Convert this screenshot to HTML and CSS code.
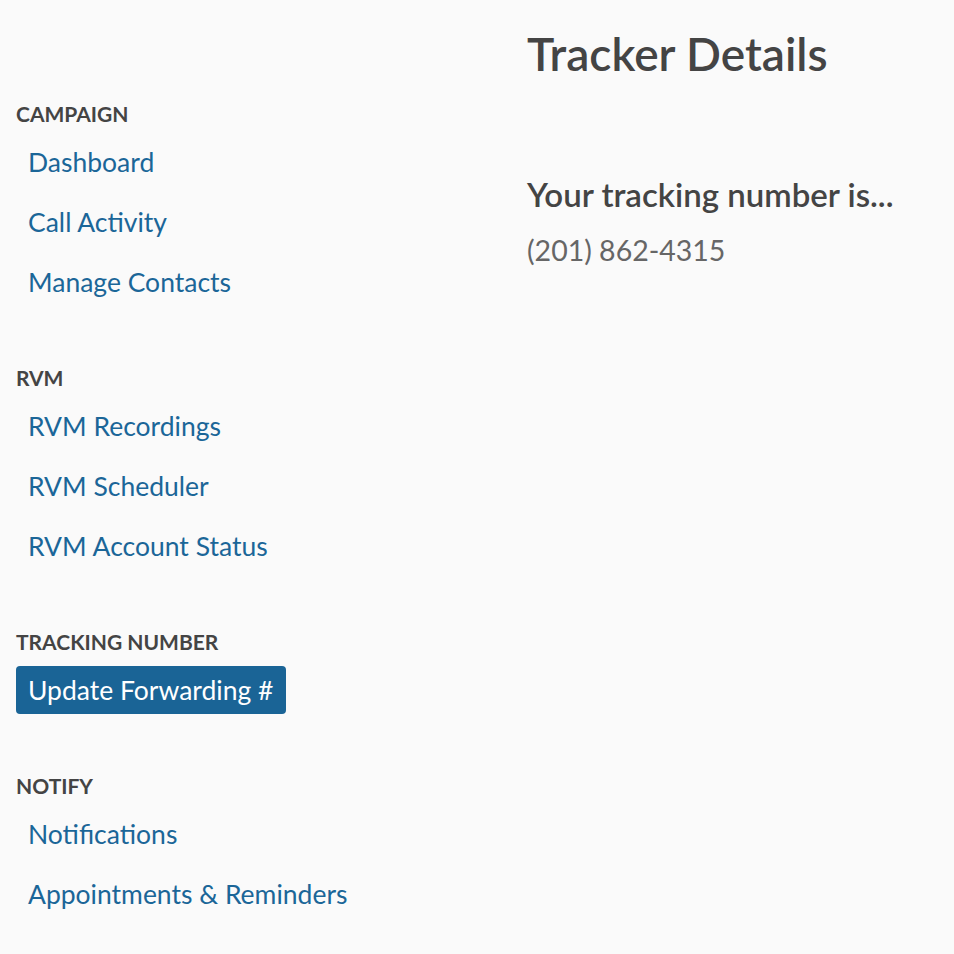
FILE: index.html
```html
<!DOCTYPE html>
<html lang="en">
<head>
<meta charset="UTF-8">
<meta name="viewport" content="width=device-width, initial-scale=1.0">
<title>Tracker Details</title>
<link rel="stylesheet" href="styles.css">
</head>
<body>
<div class="page">
  <nav class="sidebar">
    <div class="nav-section">
      <h4 class="nav-title">CAMPAIGN</h4>
      <ul class="nav-list">
        <li><a href="#">Dashboard</a></li>
        <li><a href="#">Call Activity</a></li>
        <li><a href="#">Manage Contacts</a></li>
      </ul>
    </div>

    <div class="nav-section">
      <h4 class="nav-title">RVM</h4>
      <ul class="nav-list">
        <li><a href="#">RVM Recordings</a></li>
        <li><a href="#">RVM Scheduler</a></li>
        <li><a href="#">RVM Account Status</a></li>
      </ul>
    </div>

    <div class="nav-section">
      <h4 class="nav-title">TRACKING NUMBER</h4>
      <ul class="nav-list">
        <li><a href="#" class="active">Update Forwarding #</a></li>
      </ul>
    </div>

    <div class="nav-section">
      <h4 class="nav-title">NOTIFY</h4>
      <ul class="nav-list">
        <li><a href="#">Notifications</a></li>
        <li><a href="#">Appointments &amp; Reminders</a></li>
      </ul>
    </div>
  </nav>

  <main class="content">
    <h1>Tracker Details</h1>
    <h3>Your tracking number is...</h3>
    <p class="phone">(201) 862-4315</p>
  </main>
</div>
</body>
</html>
```

FILE: styles.css
```css
:root {
  --fundo: #fafafa;
  --texto: #444;
  --texto-suave: #666;
  --azul: #1b6698;
  --azul-ativo: #1a6496;
}

body {
  margin: 0;
  background: var(--fundo);
  color: var(--texto);
  font-family: 'Lato', 'Noto Sans', sans-serif;
}

.page {
  display: grid;
  grid-template-columns: 511px 1fr;
  padding: 0 16px;
}

.sidebar {
  padding-top: 102px;
}

.nav-section {
  margin-bottom: 54px;
}

.nav-title {
  margin: 0 0 6px 0;
  font-size: 21px;
  line-height: 24px;
  font-weight: bold;
  color: var(--texto);
}

.nav-list {
  list-style: none;
  margin: 0;
  padding: 0;
}

.nav-list li {
  padding: 6px 0;
}

.nav-list a {
  display: inline-block;
  padding: 12px 13px 12px 12px;
  font-size: 26.5px;
  line-height: 24px;
  color: var(--azul);
  text-decoration: none;
  border-radius: 4px;
}

.nav-list a.active {
  background: var(--azul-ativo);
  color: #fff;
}

.content h1 {
  margin: 24px 0 0;
  font-size: 46px;
  line-height: 60px;
  font-weight: 600;
  color: var(--texto);
}

.content h3 {
  margin: 90px 0 0;
  font-size: 33px;
  line-height: 40px;
  font-weight: 600;
  color: var(--texto);
}

.phone {
  margin: 18px 0 0;
  font-size: 28.5px;
  line-height: 36px;
  color: var(--texto-suave);
}
```
